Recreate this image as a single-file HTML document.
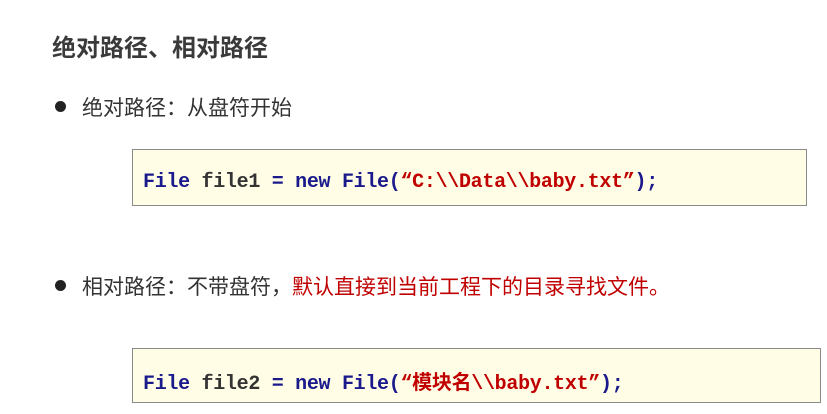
<!DOCTYPE html>
<html><head><meta charset="utf-8"><style>
body{margin:0;width:827px;height:414px;background:#fff;position:relative;overflow:hidden;font-family:"Liberation Sans","Noto Sans CJK SC",sans-serif;}
.a{position:absolute;white-space:nowrap}
.t{left:52px;top:28px;font-size:24px;font-weight:bold;color:#3a3a3a}
.b{font-size:21px;color:#333}
.dot{position:absolute;width:11px;height:11px;border-radius:50%;background:#222}
.box{position:absolute;background:#fffde6;border:1px solid #8a8a8a;box-sizing:border-box}
.code{position:absolute;left:10px;font-family:"Liberation Mono","Noto Sans CJK SC",monospace;font-weight:bold;font-size:20px;letter-spacing:-0.3px;color:#1a1a8c;white-space:pre}
.k{color:#1a1a8c}.n{color:#333}.s{color:#c00000}
</style></head><body>
<div class="a t">绝对路径、相对路径</div>
<div class="dot" style="left:55px;top:101px"></div>
<div class="a b" style="left:82px;top:92px">绝对路径：从盘符开始</div>
<div class="box" style="left:132px;top:149px;width:675px;height:57px"><div class="code" style="top:21px">File <span class="n">file1</span> = new File(<span class="s">“C:\\Data\\baby.txt”</span>);</div></div>
<div class="dot" style="left:55px;top:280px"></div>
<div class="a b" style="left:82px;top:271px">相对路径：不带盘符，<span style="color:#c00000">默认直接到当前工程下的目录寻找文件。</span></div>
<div class="box" style="left:132px;top:348px;width:689px;height:55px"><div class="code" style="top:17px">File <span class="n">file2</span> = new File(<span class="s">“模块名\\baby.txt”</span>);</div></div>
</body></html>
